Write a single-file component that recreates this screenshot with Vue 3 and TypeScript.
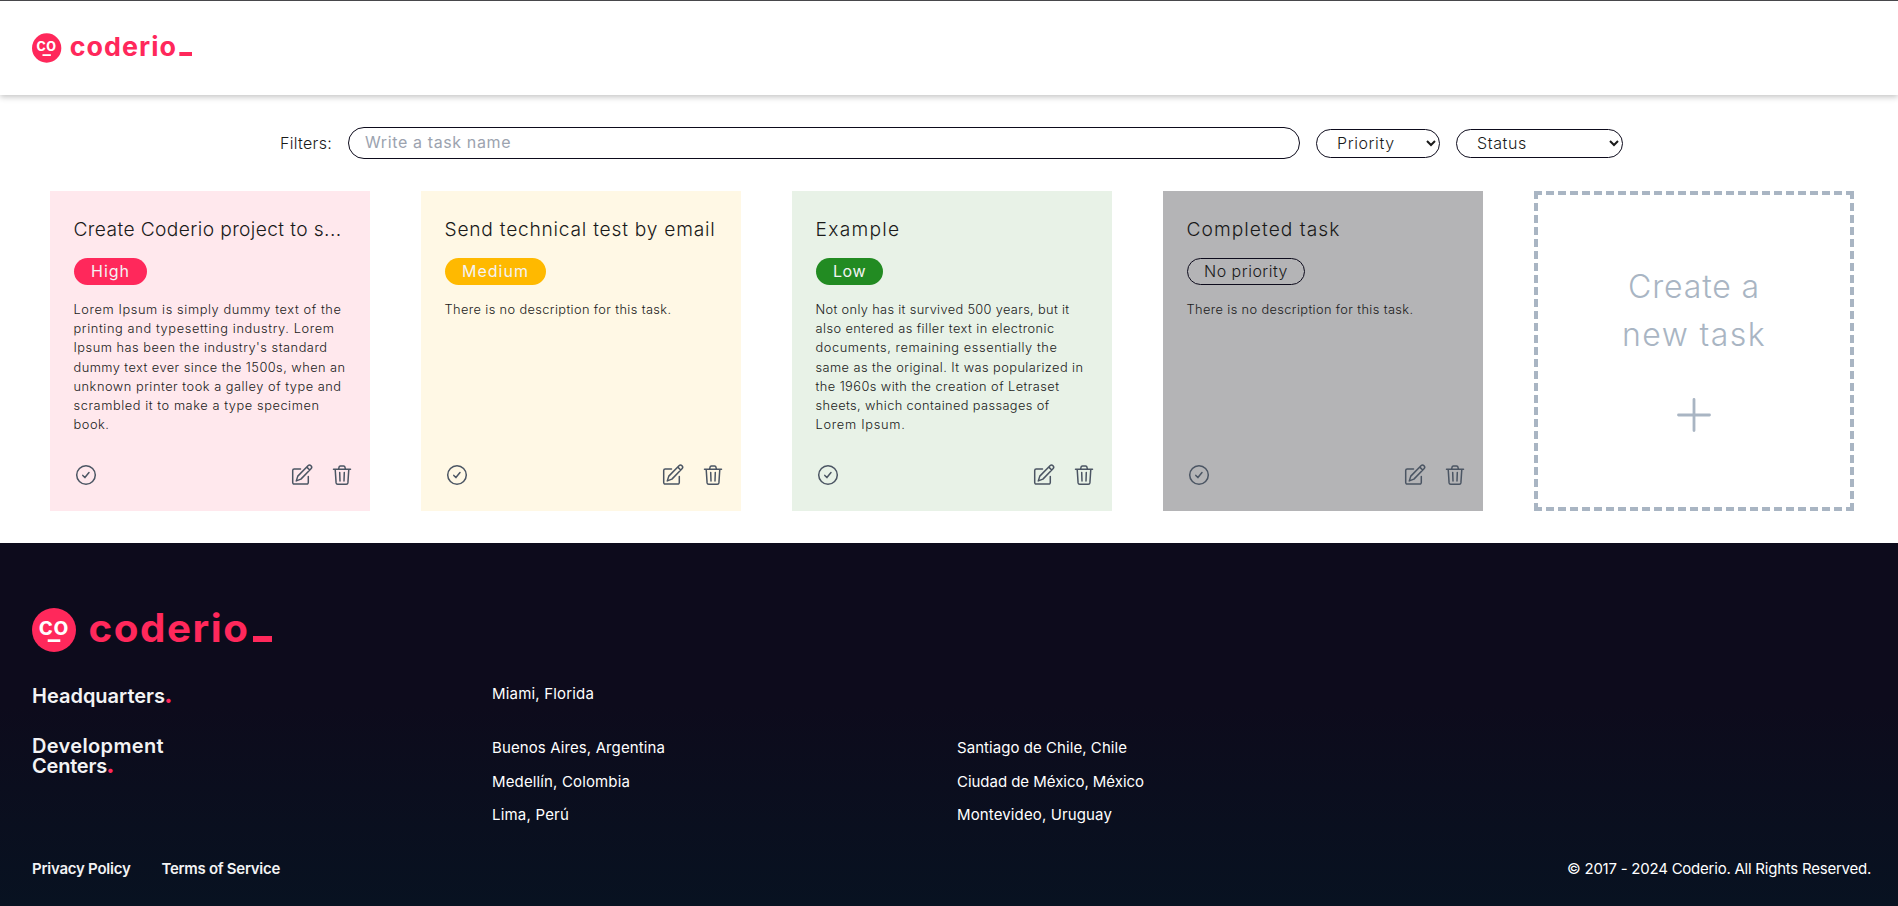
<script setup lang="ts">
import { reactive, type Directive } from 'vue'

interface Line {
  text: string
  width: number
}
interface Task {
  tone: string
  title: Line
  priority: Line
  description: Line[]
}

/* Tracks a single line of text out (or in) to the given width. */
const vTrack: Directive<HTMLElement, number> = {
  mounted(el, binding) {
    const count = (el.textContent ?? '').length
    const natural = el.getBoundingClientRect().width
    el.style.letterSpacing = `${(binding.value - natural) / count}px`
  },
}

const filters = reactive({ name: '', priority: '', status: '' })

const tasks: Task[] = [
  {
    tone: 'high',
    title: { text: 'Create Coderio project to s...', width: 268 },
    priority: { text: 'High', width: 39 },
    description: [
      { text: 'Lorem Ipsum is simply dummy text of the', width: 268 },
      { text: 'printing and typesetting industry. Lorem', width: 261 },
      { text: "Ipsum has been the industry's standard", width: 254 },
      { text: 'dummy text ever since the 1500s, when an', width: 272 },
      { text: 'unknown printer took a galley of type and', width: 268 },
      { text: 'scrambled it to make a type specimen', width: 246 },
      { text: 'book.', width: 36 },
    ],
  },
  {
    tone: 'medium',
    title: { text: 'Send technical test by email', width: 271 },
    priority: { text: 'Medium', width: 67 },
    description: [{ text: 'There is no description for this task.', width: 227 }],
  },
  {
    tone: 'low',
    title: { text: 'Example', width: 85 },
    priority: { text: 'Low', width: 33 },
    description: [
      { text: 'Not only has it survived 500 years, but it', width: 254 },
      { text: 'also entered as filler text in electronic', width: 239 },
      { text: 'documents, remaining essentially the', width: 242 },
      { text: 'same as the original. It was popularized in', width: 268 },
      { text: 'the 1960s with the creation of Letraset', width: 244 },
      { text: 'sheets, which contained passages of', width: 234 },
      { text: 'Lorem Ipsum.', width: 90 },
    ],
  },
  {
    tone: 'done',
    title: { text: 'Completed task', width: 154 },
    priority: { text: 'No priority', width: 84 },
    description: [{ text: 'There is no description for this task.', width: 227 }],
  },
]

const centers: Line[][] = [
  [
    { text: 'Buenos Aires, Argentina', width: 173 },
    { text: 'Medellín, Colombia', width: 138 },
    { text: 'Lima, Perú', width: 77 },
  ],
  [
    { text: 'Santiago de Chile, Chile', width: 170 },
    { text: 'Ciudad de México, México', width: 187 },
    { text: 'Montevideo, Uruguay', width: 155 },
  ],
]
</script>

<template>
  <div class="page">
    <header class="header">
      <svg class="logo-small" viewBox="0 0 240 44" role="img" aria-label="Coderio">
        <circle cx="22" cy="22" r="22" fill="#ff285b" />
        <text x="6.5" y="27" textLength="30" lengthAdjust="spacingAndGlyphs" font-size="25" font-weight="600" fill="#fff">co</text>
        <rect x="15.7" y="31.3" width="12.6" height="2.7" fill="#fff" />
        <text x="56.5" y="34" textLength="161" lengthAdjust="spacingAndGlyphs" font-size="39" font-weight="700" letter-spacing="1.5" fill="#ff285b">coderio</text>
        <rect x="221" y="28" width="19" height="6" fill="#ff285b" />
      </svg>
    </header>

    <main>
      <form class="filters" @submit.prevent>
        <label for="name"><span v-track="52">Filters:</span></label>
        <input id="name" v-model="filters.name" type="text" placeholder="Write a task name" />
        <select v-model="filters.priority" class="priority">
          <option value="">Priority</option>
          <option value="high">High</option>
          <option value="medium">Medium</option>
          <option value="low">Low</option>
        </select>
        <select v-model="filters.status" class="status">
          <option value="">Status</option>
          <option value="done">Completed</option>
          <option value="pending">Pending</option>
        </select>
      </form>

      <section class="board">
        <article v-for="task in tasks" :key="task.title.text" class="card" :class="task.tone">
          <h2><span v-track="task.title.width">{{ task.title.text }}</span></h2>
          <div class="pill"><span v-track="task.priority.width">{{ task.priority.text }}</span></div>
          <div class="description">
            <div v-for="line in task.description" :key="line.text">
              <span v-track="line.width">{{ line.text }}</span>
            </div>
          </div>
          <div class="actions">
            <svg class="icon" viewBox="0 0 24 24">
              <circle cx="12" cy="12" r="9.3" />
              <path d="M8.8 12.4l2.1 2.2 4.1-5" />
            </svg>
            <svg class="icon edit" viewBox="0 0 24 24">
              <path d="M10.5 5.9H4.2a1.5 1.5 0 0 0-1.5 1.5v12.2a1.5 1.5 0 0 0 1.5 1.5h12.6a1.5 1.5 0 0 0 1.5-1.5v-6" />
              <path d="M6.3 17.9l1.5-4.8L18 2.8a2.1 2.1 0 0 1 3 3L10.9 16.1zM16.8 4.1l2.9 2.9" />
            </svg>
            <svg class="icon" viewBox="0 0 24 24">
              <path d="M3.5 6.3h17M5.2 6.3l.9 13.6a1.6 1.6 0 0 0 1.6 1.4h8.6a1.6 1.6 0 0 0 1.6-1.4l.9-13.6M8.5 6.2l.5-2a1.5 1.5 0 0 1 1.4-1.2h3.2a1.5 1.5 0 0 1 1.4 1.2l.5 2M9.7 9.4l.3 8.6M14.3 9.4l-.3 8.6" />
            </svg>
          </div>
        </article>

        <button class="create" type="button">
          <div><span v-track="132">Create a</span></div>
          <div><span v-track="144">new task</span></div>
          <svg class="plus" viewBox="0 0 34 34"><path d="M17 1.5v31M1.5 17h31" /></svg>
        </button>
      </section>
    </main>

    <footer class="footer">
      <svg class="logo-large" viewBox="0 0 240 44" role="img" aria-label="Coderio">
        <circle cx="22" cy="22" r="22" fill="#ff285b" />
        <text x="6.5" y="27" textLength="30" lengthAdjust="spacingAndGlyphs" font-size="25" font-weight="600" fill="#fff">co</text>
        <rect x="15.7" y="31.3" width="12.6" height="2.7" fill="#fff" />
        <text x="56.5" y="34" textLength="161" lengthAdjust="spacingAndGlyphs" font-size="39" font-weight="700" letter-spacing="1.5" fill="#ff285b">coderio</text>
        <rect x="221" y="28" width="19" height="6" fill="#ff285b" />
      </svg>
      <div class="row headquarters">
        <h3><span v-track="133">Headquarters</span><i>.</i></h3>
        <div><span v-track="102">Miami, Florida</span></div>
      </div>
      <div class="row development">
        <h3>
          <span v-track="132">Development</span><br />
          <span v-track="75">Centers</span><i>.</i>
        </h3>
        <ul v-for="(column, index) in centers" :key="index">
          <li v-for="city in column" :key="city.text"><span v-track="city.width">{{ city.text }}</span></li>
        </ul>
      </div>
      <div class="legal">
        <div class="links">
          <a><span v-track="98.5">Privacy Policy</span></a>
          <a><span v-track="118.5">Terms of Service</span></a>
        </div>
        <div><span v-track="304">© 2017 - 2024 Coderio. All Rights Reserved.</span></div>
      </div>
    </footer>
  </div>
</template>

<style>
body {
  margin: 0;
}
</style>

<style scoped>
.page {
  box-sizing: border-box;
  height: 906px;
  overflow: hidden;
  display: flex;
  flex-direction: column;
  border-top: 1px solid #47474b;
  background: #fff;
  color: #1a1a1a;
  font: 300 16px/24px Inter, "Liberation Sans", sans-serif;
}
.page * {
  box-sizing: border-box;
}
.page span {
  display: inline-block;
  white-space: nowrap;
}
.header {
  flex: none;
  height: 94px;
  padding: 32px;
  box-shadow: 0 2px 6px rgba(0, 0, 0, 0.24);
}
.logo-small {
  display: block;
  width: 160px;
  height: 30px;
  overflow: visible;
}
.filters {
  display: flex;
  align-items: center;
  gap: 16px;
  height: 32px;
  margin: 32px 275px 32px 280px;
}
.filters label {
  width: 52px;
  flex: none;
}
.filters input,
.filters select {
  border: 1px solid #0d0b1c;
  border-radius: 16px;
  background: #fff;
  color: #1a1a1a;
  font: inherit;
}
.filters input {
  flex: 1;
  min-width: 0;
  height: 32px;
  padding: 0 16px 2px;
  letter-spacing: 0.62px;
}
.filters input::placeholder {
  color: #9ca3af;
  font-weight: 400;
  opacity: 1;
}
.filters select {
  flex: none;
  height: 29px;
  margin-top: 1px;
  padding: 0 0 1px 16px;
  letter-spacing: 0.6px;
}
.priority {
  width: 124px;
}
.status {
  width: 167px;
}
.board {
  display: grid;
  grid-template-columns: repeat(5, 320px);
  gap: 51px;
  padding: 0 44px 32px 50px;
}
.card {
  display: flex;
  flex-direction: column;
  height: 320px;
  padding: 23px 24px 24px 23.5px;
}
.high {
  background: #ffe8ed;
}
.medium {
  background: #fff8e5;
}
.low {
  background: #e8f2e7;
}
.done {
  background: #b4b4b6;
}
.card h2 {
  margin: 0 0 14px;
  font-size: 19.2px;
  font-weight: 300;
  line-height: 30px;
}
.pill {
  align-self: flex-start;
  height: 27px;
  margin-left: 0.5px;
  padding: 0 17px;
  border-radius: 14px;
  color: #f3f3f4;
  font-weight: 400;
  line-height: 27px;
}
.high .pill {
  background: #ff285b;
}
.medium .pill {
  background: #ffb900;
}
.low .pill {
  background: #228b22;
}
.done .pill {
  border: 1px solid #0d0b1c;
  padding: 0 16px;
  color: #1a1a1a;
  font-weight: 300;
  line-height: 25px;
}
.description {
  margin-top: 15px;
  font-size: 12.8px;
  line-height: 19.2px;
}
.description div {
  height: 19.2px;
}
.actions {
  display: flex;
  gap: 16px;
  margin: auto -8px 0 0.5px;
}
.icon {
  width: 24px;
  height: 24px;
  fill: none;
  stroke: #4b5563;
  stroke-width: 1.5;
  stroke-linecap: round;
  stroke-linejoin: round;
}
.edit {
  margin-left: auto;
}
.create {
  display: flex;
  flex-direction: column;
  align-items: center;
  height: 320px;
  padding: 68px 0 0;
  border: 4px dashed #a9b5c3;
  background: none;
  color: #a9b5c3;
  font: 350 32px/48px Inter, "Liberation Sans", sans-serif;
}
.plus {
  display: block;
  width: 34px;
  height: 34px;
  margin-top: 39px;
  fill: none;
  stroke: currentColor;
  stroke-width: 2.8;
  stroke-linecap: round;
}
.footer {
  flex: 1;
  padding: 65px 27px 0 32px;
  background: linear-gradient(180deg, #0d0b1c 45%, #081221);
  color: #fff;
  font-size: 15px;
  font-weight: 400;
}
.logo-large {
  display: block;
  width: 240px;
  height: 44px;
  overflow: visible;
}
.row {
  display: grid;
  grid-template-columns: 460px 465px 1fr;
}
.row h3 {
  margin: 0;
  color: #f3f3f4;
  font-size: 20px;
  font-weight: 600;
  line-height: 20px;
}
.row i {
  color: #ff285b;
  font-size: 26px;
  font-style: normal;
  font-weight: 700;
  line-height: 0;
  margin-left: -1px;
}
.headquarters {
  margin-top: 30px;
  height: 50px;
}
.headquarters h3 {
  padding-top: 4px;
}
.development h3 {
  padding-top: 4px;
}
.row ul {
  margin: 4px 0 0;
  padding: 0;
  list-style: none;
}
.row li {
  height: 33.5px;
  line-height: 24px;
}
.legal {
  display: flex;
  justify-content: space-between;
  margin-top: 20px;
}
.links {
  display: flex;
  gap: 31px;
  color: #f3f3f4;
  font-weight: 600;
}
</style>
